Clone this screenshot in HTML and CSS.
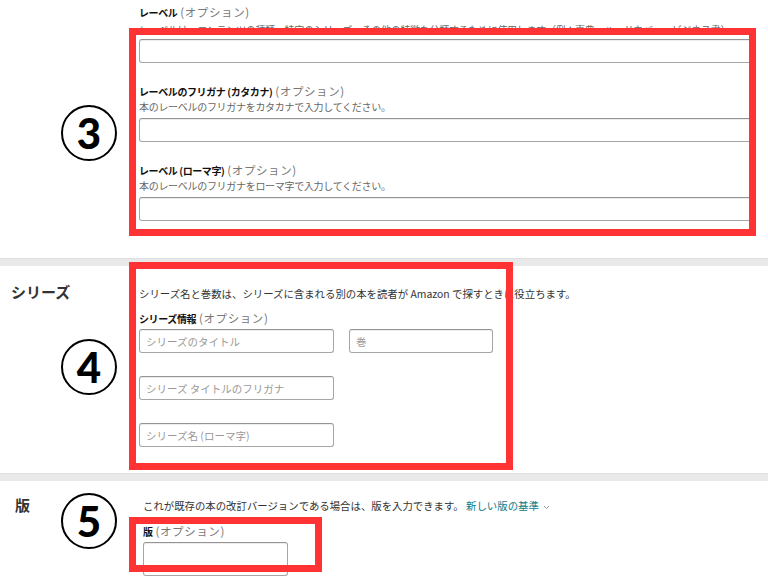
FILE: index.html
```html
<!DOCTYPE html>
<html lang="ja">
<head>
<meta charset="utf-8">
<title>KDP 詳細</title>
<link rel="stylesheet" href="styles.css">
</head>
<body>
<div class="page">
  <section class="sec sec-label">
    <div class="side"></div>
    <div class="main">
      <div class="field">
        <div class="lbl">レーベル <span class="opt">(オプション)</span></div>
        <div class="desc desc-first">レーベルは、コンテンツの種類、特定のシリーズ、その他の特徴を分類するために使用します（例：事典、ハードカバー、ビジネス書）。</div>
        <input class="inp inp-first" type="text">
      </div>
      <div class="field">
        <div class="lbl">レーベルのフリガナ (カタカナ) <span class="opt">(オプション)</span></div>
        <div class="desc">本のレーベルのフリガナをカタカナで入力してください。</div>
        <input class="inp" type="text">
      </div>
      <div class="field">
        <div class="lbl">レーベル (ローマ字) <span class="opt">(オプション)</span></div>
        <div class="desc">本のレーベルのフリガナをローマ字で入力してください。</div>
        <input class="inp" type="text">
      </div>
    </div>
  </section>
  <div class="sep"></div>
  <section class="sec sec-series">
    <h3 class="side heading">シリーズ</h3>
    <div class="main">
      <div class="desc dark">シリーズ名と巻数は、シリーズに含まれる別の本を読者が Amazon で探すときに役立ちます。</div>
      <div class="lbl lbl-gap">シリーズ情報 <span class="opt">(オプション)</span></div>
      <div class="row">
        <input class="inp w-title" type="text" placeholder="シリーズのタイトル">
        <input class="inp w-vol" type="text" placeholder="巻">
      </div>
      <div class="row row-gap">
        <input class="inp w-title" type="text" placeholder="シリーズ タイトルのフリガナ">
      </div>
      <div class="row row-gap">
        <input class="inp w-title" type="text" placeholder="シリーズ名 (ローマ字)">
      </div>
    </div>
  </section>
  <div class="sep"></div>
  <section class="sec sec-edition">
    <h3 class="side heading heading-ed">版</h3>
    <div class="main">
      <div class="desc dark">これが既存の本の改訂バージョンである場合は、版を入力できます。 <span class="link">新しい版の基準</span><svg class="chev" width="7" height="5" viewBox="0 0 7 5"><path d="M1 1l2.5 2.5L6 1" fill="none" stroke="#8a9a9c" stroke-width="1"/></svg></div>
      <div class="lbl lbl-gap2">版 <span class="opt">(オプション)</span></div>
      <input class="inp w-ed" type="text">
    </div>
  </section>

  <div class="box box1"></div>
  <div class="box box2"></div>
  <div class="box box3"></div>
  <div class="num n3">3</div>
  <div class="num n4">4</div>
  <div class="num n5">5</div>
</div>
</body>
</html>
```
FILE: styles.css
```css
html, body {
  margin: 0;
  padding: 0;
  background: #fff;
}
body {
  font-family: "Noto Sans CJK JP", "Noto Sans", sans-serif;
  color: #111;
}
.page {
  position: relative;
  width: 768px;
  height: 576px;
  overflow: hidden;
  background: #fff;
}
.sec {
  display: grid;
  grid-template-columns: 139px 1fr;
}
.sec-label {
  padding: 5px 16px 37px 0;
}
.sec-series {
  padding: 20px 0 26px 0;
}
.sec-edition {
  grid-template-columns: 143px 1fr;
  padding: 17px 0 0 0;
}
.main {
  display: flex;
  flex-direction: column;
  min-width: 0;
}
.field {
  display: flex;
  flex-direction: column;
}
.field + .field {
  margin-top: 21px;
}
.lbl {
  font-size: 10px;
  line-height: 15px;
  font-weight: 700;
  color: #111;
  white-space: nowrap;
  letter-spacing: -0.4px;
}
.opt {
  font-weight: 400;
  font-size: 11.5px;
  letter-spacing: 0.6px;
  margin-left: 1px;
  color: #777;
}
.desc {
  font-size: 10px;
  line-height: 15px;
  color: #666;
  white-space: nowrap;
  letter-spacing: -0.3px;
}
.desc-first {
  margin-top: 2px;
}
.desc.dark {
  font-size: 10.4px;
  letter-spacing: 0;
  color: #333;
}
.lbl-gap {
  margin-top: 10px;
}
.lbl-gap2 {
  margin-top: 11px;
}
.inp {
  display: block;
  box-sizing: border-box;
  height: 24px;
  margin: 4px 0 0 0;
  padding: 0 6px;
  border: 1px solid #a6a6a6;
  border-top-color: #949494;
  border-radius: 3px;
  background: #fff;
  box-shadow: 0 1px 0 rgba(255,255,255,.5), inset 0 1px 0 rgba(0,0,0,.07);
  font-family: "Noto Sans CJK JP", sans-serif;
  font-size: 10.5px;
  color: #111;
  outline: none;
}
.inp-first {
  margin-top: 2px;
}
.inp::placeholder {
  color: #999;
}
.row {
  display: flex;
  gap: 15px;
  margin-top: -1px;
}
.row-gap {
  margin-top: 19px;
}
.w-title {
  width: 195px;
}
.w-vol {
  width: 144px;
}
.w-ed {
  width: 145px;
  height: 34px;
  margin-top: 3px;
}
.sep {
  height: 8px;
  box-sizing: border-box;
  background: #e9e9e9;
  border-top: 1px solid #dedede;
}
.heading {
  margin: -3px 0 0 0;
  padding-left: 11px;
  font-size: 15px;
  line-height: 18px;
  font-weight: 700;
  color: #333;
}
.heading-ed {
  padding-left: 15px;
  margin-top: -2px;
}
.link {
  color: #0a7d8a;
}
.chev {
  margin-left: 4px;
  vertical-align: middle;
}
.box {
  position: absolute;
  box-sizing: border-box;
  border: 7px solid #ff3333;
}
.box1 {
  left: 129px;
  top: 28px;
  width: 627px;
  height: 208px;
}
.box2 {
  left: 129px;
  top: 262px;
  width: 384px;
  height: 208px;
}
.box3 {
  left: 129px;
  top: 517px;
  width: 193px;
  height: 55px;
}
.num {
  position: absolute;
  left: 61px;
  width: 56px;
  height: 56px;
  box-sizing: border-box;
  border: 2px solid #000;
  border-radius: 50%;
  display: flex;
  align-items: center;
  justify-content: center;
  font-family: "Lato", "Open Sans", sans-serif;
  font-weight: 900;
  font-size: 42px;
  line-height: 1;
  color: #000;
}
.n3 { top: 105px; }
.n4 { top: 339px; }
.n5 { top: 493px; }
```
